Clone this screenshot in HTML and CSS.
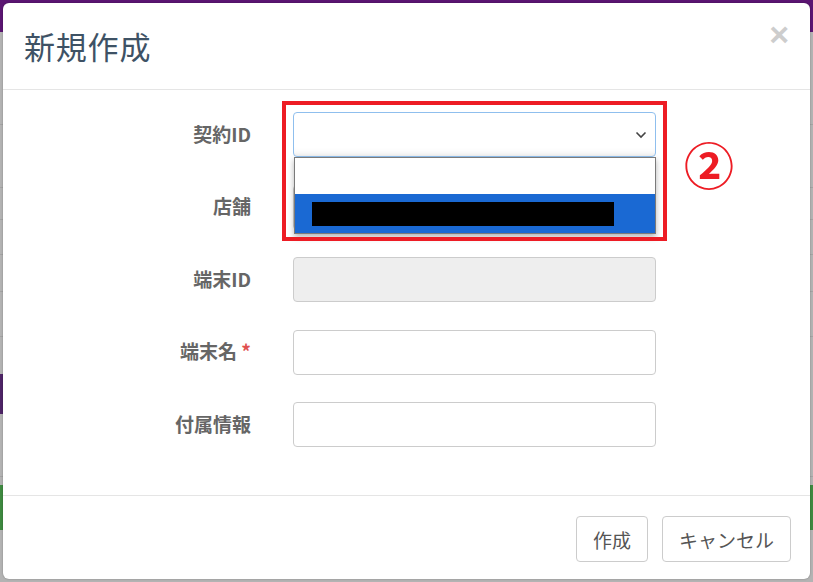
FILE: index.html
```html
<!DOCTYPE html>
<html lang="ja">
<head>
<meta charset="utf-8">
<title>新規作成</title>
<link rel="stylesheet" href="styles.css">
</head>
<body>
<div class="page">
  <div class="topbar"></div>
  <div class="rows">
    <div class="row r1"></div>
    <div class="row r2"></div>
    <div class="row r3"></div>
    <div class="row r4"></div>
    <div class="row r5"></div>
    <div class="row r6"></div>
  </div>
  <div class="band-purple"></div>
  <div class="row r7"></div>
  <div class="spacer"></div>
  <div class="band-green"></div>
  <div class="rest"></div>
</div>

<div class="modal">
  <div class="modal-header">
    <h4 class="modal-title">新規作成</h4>
    <span class="close">×</span>
  </div>
  <div class="modal-body">
    <div class="form-row">
      <label class="form-label">契約ID</label>
      <div class="select-wrap">
        <div class="select">
          <svg class="chev" width="12" height="8" viewBox="0 0 12 8"><path d="M1.5 1.5 L6 6 L10.5 1.5" fill="none" stroke="#444" stroke-width="1.6"/></svg>
        </div>
        <div class="dropdown">
          <div class="opt"></div>
          <div class="opt selected"><span class="redact"></span></div>
        </div>
        <div class="annot-box"></div>
        <div class="annot-num">②</div>
      </div>
    </div>
    <div class="form-row">
      <label class="form-label">店舗</label>
      <div class="input"></div>
    </div>
    <div class="form-row">
      <label class="form-label">端末ID</label>
      <div class="input disabled"></div>
    </div>
    <div class="form-row">
      <label class="form-label">端末名 <span class="req">*</span></label>
      <div class="input"></div>
    </div>
    <div class="form-row">
      <label class="form-label">付属情報</label>
      <div class="input"></div>
    </div>
  </div>
  <div class="modal-footer">
    <button class="btn">作成</button>
    <button class="btn">キャンセル</button>
  </div>
</div>
</body>
</html>
```

FILE: styles.css
```css
html, body {
  margin: 0;
  padding: 0;
  width: 813px;
  height: 582px;
  overflow: hidden;
  font-family: "Noto Sans CJK JP", "Noto Sans", sans-serif;
}

.page {
  display: flex;
  flex-direction: column;
  height: 582px;
  background: #b3b3b3;
}
.topbar { height: 32px; background: #5b1572; }
.rows { display: flex; flex-direction: column; }
.row { border-bottom: 1px solid #a3a3a3; }
.r1 { height: 92px; }
.r2 { height: 62px; }
.r3 { height: 31px; }
.r4 { height: 34px; }
.r5 { height: 36px; }
.r6 { height: 44px; }
.band-purple { height: 40px; width: 120px; background: #4e2466; margin-top: 37px; }
.r7 { height: 62px; }
.spacer { height: 8px; }
.band-green { height: 45px; background: #3e8a40; }
.rest { flex: 1; }

.modal {
  position: absolute;
  left: 3px;
  top: 3px;
  width: 807px;
  height: 576px;
  background: #fff;
  border-radius: 6px;
  display: flex;
  flex-direction: column;
  box-shadow: 0 0 2px rgba(0,0,0,0.3);
}

.modal-header {
  height: 86px;
  border-bottom: 1px solid #e5e5e5;
  display: flex;
  align-items: center;
  justify-content: space-between;
  padding: 0 21px 0 21px;
}
.modal-title {
  margin: 0;
  font-size: 31px;
  font-weight: 400;
  color: #3e5265;
  letter-spacing: 0.8px;
  line-height: 1;
  padding-bottom: 2px;
}
.close {
  font-family: "Liberation Sans", Arial, sans-serif;
  font-size: 34px;
  font-weight: 700;
  color: #cdcdcd;
  line-height: 1;
  align-self: flex-start;
  margin-top: 14px;
}

.modal-body {
  flex: 1;
  padding-top: 22px;
  display: flex;
  flex-direction: column;
  gap: 27.5px;
}

.form-row {
  display: grid;
  grid-template-columns: 248px 363px;
  column-gap: 42px;
  align-items: center;
}
.form-label {
  text-align: right;
  font-size: 19px;
  font-weight: 700;
  color: #666;
  line-height: 1;
  padding-bottom: 3px;
}
.req { color: #e0504f; }

.input, .select {
  height: 45px;
  box-sizing: border-box;
  border: 1px solid #ccc;
  border-radius: 4px;
  background: #fff;
}
.input.disabled { background: #eee; }

.select-wrap { position: relative; }
.select {
  border-color: #8fbfee;
  display: flex;
  align-items: center;
  justify-content: flex-end;
  padding-right: 8px;
  box-shadow: inset 0 -10px 10px -10px rgba(0,0,0,0.12);
}
.chev { display: block; }

.dropdown {
  position: absolute;
  left: 1px;
  right: 0;
  top: 45px;
  border: 1px solid #7a7a7a;
  background: #fff;
  box-shadow: 0 3px 6px rgba(0,0,0,0.3);
  z-index: 2;
}
.opt { height: 36px; }
.opt.selected {
  height: 39px;
  background: #1a69d3;
  display: flex;
  align-items: center;
  padding-left: 17px;
}
.redact {
  display: block;
  width: 302px;
  height: 24px;
  background: #000;
}

.annot-box {
  position: absolute;
  left: -11px;
  top: -11px;
  width: 385px;
  height: 140px;
  box-sizing: border-box;
  border: 4px solid #ed1c24;
  z-index: 3;
}
.annot-num {
  position: absolute;
  left: 391px;
  top: 26px;
  font-size: 50px;
  font-weight: 700;
  color: #ed1c24;
  line-height: 1;
  z-index: 3;
}

.modal-footer {
  border-top: 1px solid #e5e5e5;
  height: 84px;
  display: flex;
  justify-content: flex-end;
  align-items: flex-start;
  padding: 20px 19px 0 0;
  gap: 14px;
  box-sizing: border-box;
}
.btn {
  height: 46px;
  padding: 0 16px;
  font-family: "Noto Sans CJK JP", "Noto Sans", sans-serif;
  font-size: 19px;
  color: #555;
  background: #fff;
  border: 1px solid #ccc;
  border-radius: 4px;
}
```
